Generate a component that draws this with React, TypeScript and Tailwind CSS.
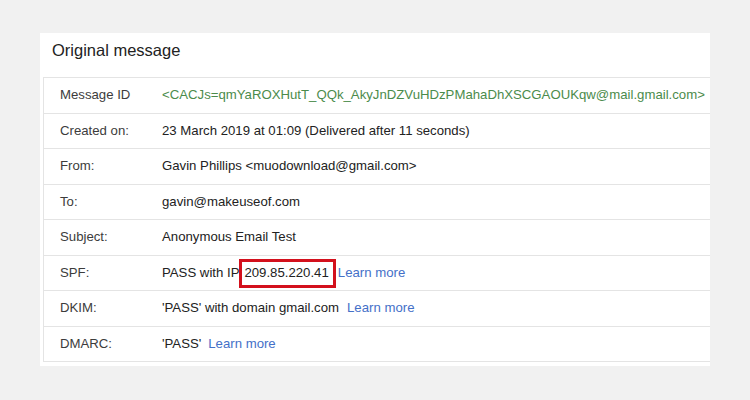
import React from "react";

const font = { fontFamily: '"Liberation Sans", Arial, sans-serif' };

function Row({ label, children }: { label: string; children: React.ReactNode }) {
  return (
    <div className="flex h-[35.5px] items-center border-b border-[#e4e4e4] text-[13.2px]">
      <div className="w-[118px] shrink-0 pl-[16px] text-[#3c3c3c]">{label}</div>
      <div className="flex items-center whitespace-nowrap text-[#222]">{children}</div>
    </div>
  );
}

const Learn = ({ className = "" }: { className?: string }) => (
  <span className={"text-[#4470c8] " + className}>Learn more</span>
);

export default function App() {
  return (
    <div className="h-[400px] w-[750px] bg-[#f1f1f1] pl-[40px] pt-[33px]" style={font}>
      <div className="h-[333px] w-[670px] overflow-hidden bg-white">
        <div className="h-[44px] pl-[12px] pt-[7px] text-[16.5px] leading-[20px] text-[#222]">
          Original message
        </div>
        <div className="ml-[3px] border-l border-t border-[#e4e4e4]">
          <Row label="Message ID">
            <span className="text-[#4b8b4b]">
              &lt;CACJs=qmYaROXHutT_QQk_AkyJnDZVuHDzPMahaDhXSCGAOUKqw@mail.gmail.com&gt;
            </span>
          </Row>
          <Row label="Created on:">23 March 2019 at 01:09 (Delivered after 11 seconds)</Row>
          <Row label="From:">Gavin Phillips &lt;muodownload@gmail.com&gt;</Row>
          <Row label="To:">gavin@makeuseof.com</Row>
          <Row label="Subject:">Anonymous Email Test</Row>
          <Row label="SPF:">
            <span>PASS with IP</span>
            <span className="relative ml-[5px] leading-[16px]">
              209.85.220.41
              <span className="pointer-events-none absolute left-[-5px] right-[-7px] top-[-6px] bottom-[-7px] border-[3px] border-[#d3101c]" />
            </span>
            <Learn className="ml-[9px]" />
          </Row>
          <Row label="DKIM:">
            <span>'PASS' with domain gmail.com</span>
            <Learn className="ml-[8px]" />
          </Row>
          <Row label="DMARC:">
            <span>'PASS'</span>
            <Learn className="ml-[7px]" />
          </Row>
        </div>
      </div>
    </div>
  );
}
